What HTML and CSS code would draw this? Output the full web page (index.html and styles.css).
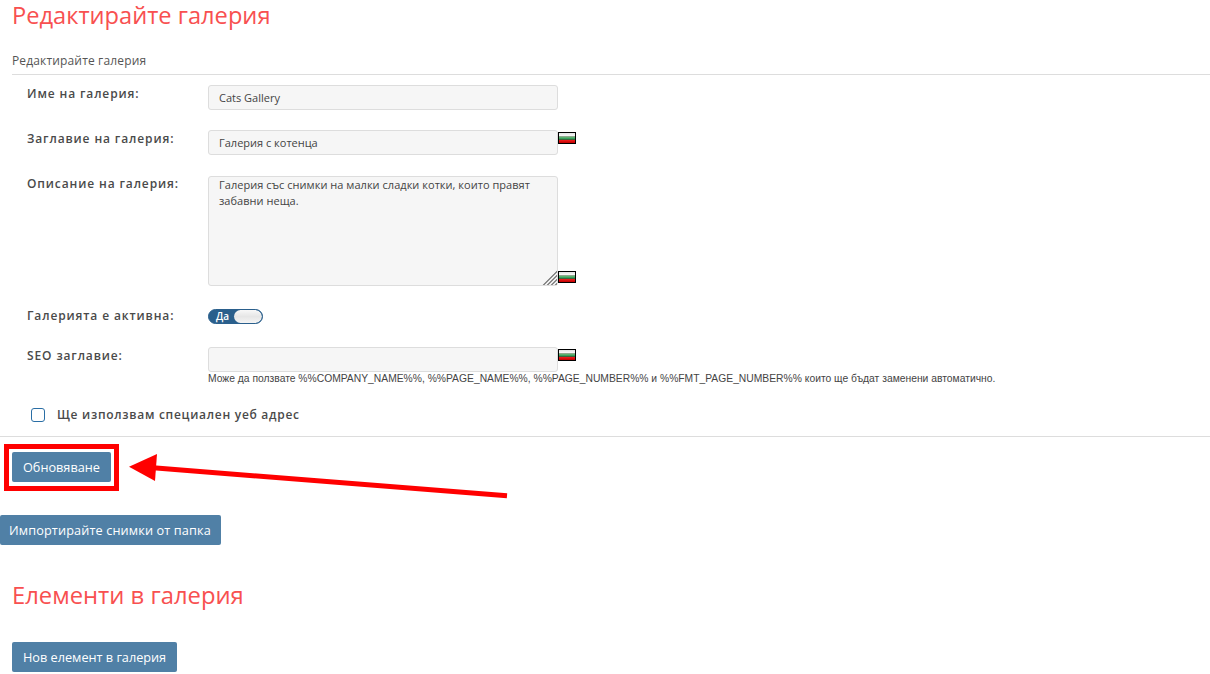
FILE: index.html
```html
<!DOCTYPE html>
<html lang="bg">
<head>
<meta charset="utf-8">
<title>Редактирайте галерия</title>
<link rel="stylesheet" href="styles.css">
</head>
<body>
<h1 class="title">Редактирайте галерия</h1>
<div class="legend">Редактирайте галерия</div>
<form class="form">
  <div class="row row-name">
    <label class="label">Име на галерия:</label>
    <div class="field"><input class="input" type="text" value="Cats Gallery"></div>
  </div>
  <div class="row row-title">
    <label class="label">Заглавие на галерия:</label>
    <div class="field"><input class="input" type="text" value="Галерия с котенца"><svg class="flag" viewBox="0 0 18 12"><use href="#bg"/></svg></div>
  </div>
  <div class="row row-desc">
    <label class="label label-desc">Описание на галерия:</label>
    <div class="field field-end"><textarea class="input area">Галерия със снимки на малки сладки котки, които правят забавни неща.</textarea><svg class="flag" viewBox="0 0 18 12"><use href="#bg"/></svg></div>
  </div>
  <div class="row row-active">
    <label class="label label-active">Галерията е активна:</label>
    <div class="toggle"><span class="toggle-text">Да</span><span class="toggle-knob"></span></div>
  </div>
  <div class="row row-seo">
    <label class="label">SEO заглавие:</label>
    <div class="field-wrap">
      <div class="field"><input class="input" type="text"><svg class="flag" viewBox="0 0 18 12"><use href="#bg"/></svg></div>
      <p class="help">Може да ползвате %%COMPANY_NAME%%, %%PAGE_NAME%%, %%PAGE_NUMBER%% и %%FMT_PAGE_NUMBER%% които ще бъдат заменени автоматично.</p>
    </div>
  </div>
  <div class="check-row">
    <span class="check"></span>
    <label class="label">Ще използвам специален уеб адрес</label>
  </div>
  <div class="actions"><button type="button" class="btn">Обновяване</button></div>
</form>
<div class="import"><button type="button" class="btn btn-import">Импортирайте снимки от папка</button></div>
<h2 class="title title-items">Елементи в галерия</h2>
<div class="new"><button type="button" class="btn">Нов елемент в галерия</button></div>

<div class="mark-box"></div>
<svg class="mark-arrow" width="520" height="60" viewBox="0 0 520 60">
  <path d="M507 45.7 L150 17.6" stroke="#ff0000" stroke-width="5" fill="none"/>
  <path d="M129 16.7 L157 4 L155 31 Z" fill="#ff0000"/>
</svg>

<svg class="defs" width="0" height="0">
  <defs>
    <linearGradient id="w" x1="0" y1="0" x2="0" y2="1"><stop offset="0" stop-color="#e2e2e2"/><stop offset="1" stop-color="#ffffff"/></linearGradient>
    <linearGradient id="g" x1="0" y1="0" x2="0" y2="1"><stop offset="0" stop-color="#7cc07c"/><stop offset="1" stop-color="#0a8a4a"/></linearGradient>
    <linearGradient id="r" x1="0" y1="0" x2="0" y2="1"><stop offset="0" stop-color="#f52020"/><stop offset="1" stop-color="#c00000"/></linearGradient>
    <g id="bg">
      <rect width="18" height="12" fill="#000"/>
      <rect x="1" y="1" width="16" height="3.6" fill="url(#w)"/>
      <rect x="1" y="4.6" width="16" height="3.2" fill="url(#g)"/>
      <rect x="1" y="7.8" width="16" height="3.2" fill="url(#r)"/>
    </g>
  </defs>
</svg>
</body>
</html>
```
FILE: styles.css
```css
* { box-sizing: border-box; }
html, body { margin: 0; padding: 0; }
body {
  position: relative;
  height: 674px;
  overflow: hidden;
  background: #fff;
  color: #444;
  font-family: "Open Sans", "Noto Sans", sans-serif;
  font-size: 12px;
}
.title {
  margin: 0;
  padding-left: 12px;
  color: #f85050;
  font-size: 23.65px;
  font-weight: 400;
  line-height: 30px;
}
.legend {
  margin: 22px 0 0 12px;
  height: 23px;
  border-bottom: 1px solid #ddd;
  color: #555;
  font-size: 12px;
  letter-spacing: 0.15px;
  line-height: 17px;
}
.row {
  display: flex;
  align-items: flex-start;
  padding-left: 27px;
}
.label {
  display: block;
  width: 181px;
  flex: none;
  color: #4a4a4a;
  font-size: 12px;
  font-weight: 600;
  letter-spacing: 0.88px;
  line-height: 17px;
}
.label-desc { margin-top: -1px; }
.label-active { margin-top: -2px; }
.row-name { margin-top: 10px; }
.row-title { margin-top: 20px; }
.row-desc { margin-top: 21px; }
.row-active { margin-top: 23px; }
.row-seo { margin-top: 23px; }
.field { display: flex; align-items: flex-start; }
.field-end { align-items: flex-end; }
.input {
  display: block;
  width: 350px;
  height: 25px;
  padding: 0 10px;
  margin: 0;
  border: 1px solid #ddd;
  border-radius: 3px;
  background: #f6f6f6;
  color: #444;
  font-family: "Open Sans", "Noto Sans", sans-serif;
  font-size: 11px;
  line-height: 16px;
}
.area {
  height: 110px;
  padding: 0 10px;
  letter-spacing: 0.03px;
  resize: both;
}
.area::-webkit-resizer {
  background:
    linear-gradient(135deg, #f6f6f6 50%, transparent 50%),
    repeating-linear-gradient(135deg, #8a8a8a 0 1px, #f0f0f0 1px 2.8px);
}
.flag { display: block; width: 18px; height: 12px; margin-top: 2px; }
.field-end .flag { margin: 0 0 3px; }
.help {
  margin: 0;
  color: #444;
  font-family: "Liberation Sans", Arial, sans-serif;
  font-size: 10.32px;
  line-height: 13px;
}
.toggle {
  display: flex;
  align-items: center;
  width: 55px;
  height: 15px;
  border: 1px solid #2a5f8c;
  border-radius: 8px;
  background: #2a5f8c;
  overflow: hidden;
}
.toggle-text {
  width: 25px;
  flex: none;
  padding-left: 7px;
  color: #fff;
  font-size: 10px;
  font-weight: 600;
  line-height: 13px;
}
.toggle-knob {
  flex: 1;
  height: 13px;
  border-radius: 7px;
  background: linear-gradient(#f8f8f8, #e6e6e6 50%, #f4f4f4);
}
.check-row {
  display: flex;
  align-items: center;
  margin-top: 21px;
  padding-left: 31px;
  height: 17px;
}
.check {
  width: 14px;
  height: 14px;
  flex: none;
  margin-right: 12px;
  border: 1px solid #2a6ea5;
  border-radius: 3px;
  background: #fff;
}
.check-row .label { width: auto; letter-spacing: 0.72px; }
.actions {
  margin-top: 13px;
  padding: 15px 0 0 12px;
  border-top: 1px solid #ddd;
}
.btn {
  display: block;
  height: 30px;
  padding: 0 11px;
  border: 0;
  border-radius: 2px;
  background: #5080a6;
  color: #fff;
  font-family: "Open Sans", "Noto Sans", sans-serif;
  font-size: 12.7px;
  line-height: 30px;
}
.btn-import { padding: 0 10px 0 9px; letter-spacing: 0.13px; }
.import { margin-top: 33px; }
.title-items { margin-top: 35px; font-size: 23.8px; }
.new { margin-top: 32px; padding-left: 12px; }
.mark-box {
  position: absolute;
  left: 4px;
  top: 444px;
  width: 115px;
  height: 47px;
  border: 5px solid #f00;
}
.mark-arrow {
  position: absolute;
  left: 0;
  top: 450px;
}
.defs { position: absolute; }
```
